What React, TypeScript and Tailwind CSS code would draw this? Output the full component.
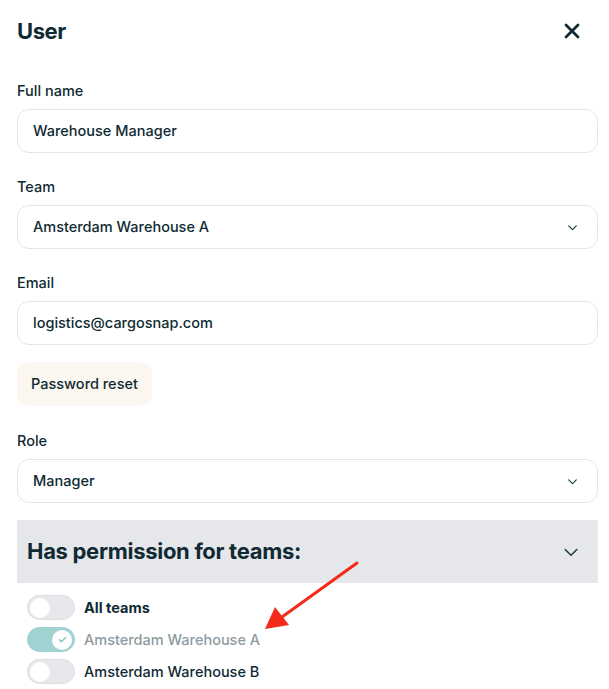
import React from "react";

const Chevron = ({ size = 14, stroke = 1.8 }: { size?: number; stroke?: number }) => (
  <svg width={size} height={size} viewBox="0 0 24 24" fill="none" stroke="#1e3a44" strokeWidth={stroke} strokeLinecap="round" strokeLinejoin="round">
    <path d="M5 9l7 7 7-7" />
  </svg>
);

const Field = ({ label, value, select }: { label: string; value: string; select?: boolean }) => (
  <div className="flex flex-col">
    <div className="text-[14.5px] font-[450] text-[#0f2a33] leading-5 mb-[8px]">{label}</div>
    <div className="h-[44px] rounded-[12px] border border-[#e3e5e8] bg-white flex items-center justify-between pl-[15px] pr-[18px] text-[14.5px] font-[450] text-[#0f2a33]">
      <span>{value}</span>
      {select && <Chevron size={13} stroke={2.2} />}
    </div>
  </div>
);

const Toggle = ({ on }: { on?: boolean }) => (
  <div className={`w-[48px] h-[25px] rounded-full border flex items-center px-[2px] ${on ? "bg-[#9fd2d0] border-[#9fd2d0] justify-end" : "bg-[#e7e8ec] border-[#dcdee2] justify-start"}`}>
    <div className="w-[20px] h-[20px] rounded-full bg-white flex items-center justify-center">
      {on && (
        <svg width="11" height="11" viewBox="0 0 24 24" fill="none" stroke="#7fc3c1" strokeWidth={3} strokeLinecap="round" strokeLinejoin="round">
          <path d="M5 12.5l4.5 4.5L19 7.5" />
        </svg>
      )}
    </div>
  </div>
);

export default function App() {
  return (
    <div className="relative w-[609px] h-[689px] bg-white overflow-hidden" style={{ fontFamily: "Inter, 'Noto Sans', sans-serif" }}>
      <div className="px-[17px] pr-[11px] pt-[17px] flex flex-col">
        <div className="flex items-center justify-between h-[28px]">
          <h1 className="text-[22px] font-bold text-[#0f2a33] tracking-[-0.4px]">User</h1>
          <svg width="16" height="16" viewBox="0 0 16 16" className="mr-[18px]" stroke="#0f2a33" strokeWidth={2.8} strokeLinecap="round">
            <path d="M2 2l12 12M14 2L2 14" />
          </svg>
        </div>
        <div className="mt-[36px] flex flex-col gap-[24px]">
          <Field label="Full name" value="Warehouse Manager" />
          <Field label="Team" value="Amsterdam Warehouse A" select />
          <Field label="Email" value="logistics@cargosnap.com" />
        </div>
        <div className="mt-[17px]">
          <button className="h-[44px] px-[14px] rounded-[12px] bg-[#fbf6f0] text-[14.5px] font-[450] text-[#0f2a33]">Password reset</button>
        </div>
        <div className="mt-[25px]">
          <Field label="Role" value="Manager" select />
        </div>
        <div className="mt-[17px] h-[63px] bg-[#e6e7eb] flex items-center justify-between pl-[10px] pr-[17px]">
          <span className="text-[22px] font-bold text-[#0f2a33] tracking-[-0.3px]">Has permission for teams:</span>
          <Chevron size={20} stroke={1.8} />
        </div>
        <div className="pl-[10px] pt-[12px] flex flex-col gap-[7px]">
          <div className="flex items-center gap-[9px]">
            <Toggle />
            <span className="text-[14.5px] font-bold text-[#0f2a33]">All teams</span>
          </div>
          <div className="flex items-center gap-[9px]">
            <Toggle on />
            <span className="text-[14.5px] font-[450] text-[#8d9a9f]">Amsterdam Warehouse A</span>
          </div>
          <div className="flex items-center gap-[9px]">
            <Toggle />
            <span className="text-[14.5px] font-[450] text-[#0f2a33]">Amsterdam Warehouse B</span>
          </div>
        </div>
      </div>
      <svg className="absolute left-0 top-0 pointer-events-none" width="609" height="689">
        <line x1="357" y1="563" x2="282" y2="617" stroke="#f42a1a" strokeWidth="3" strokeLinecap="round" />
        <polygon points="265,629 275,607 289,625" fill="#f42a1a" />
      </svg>
    </div>
  );
}
